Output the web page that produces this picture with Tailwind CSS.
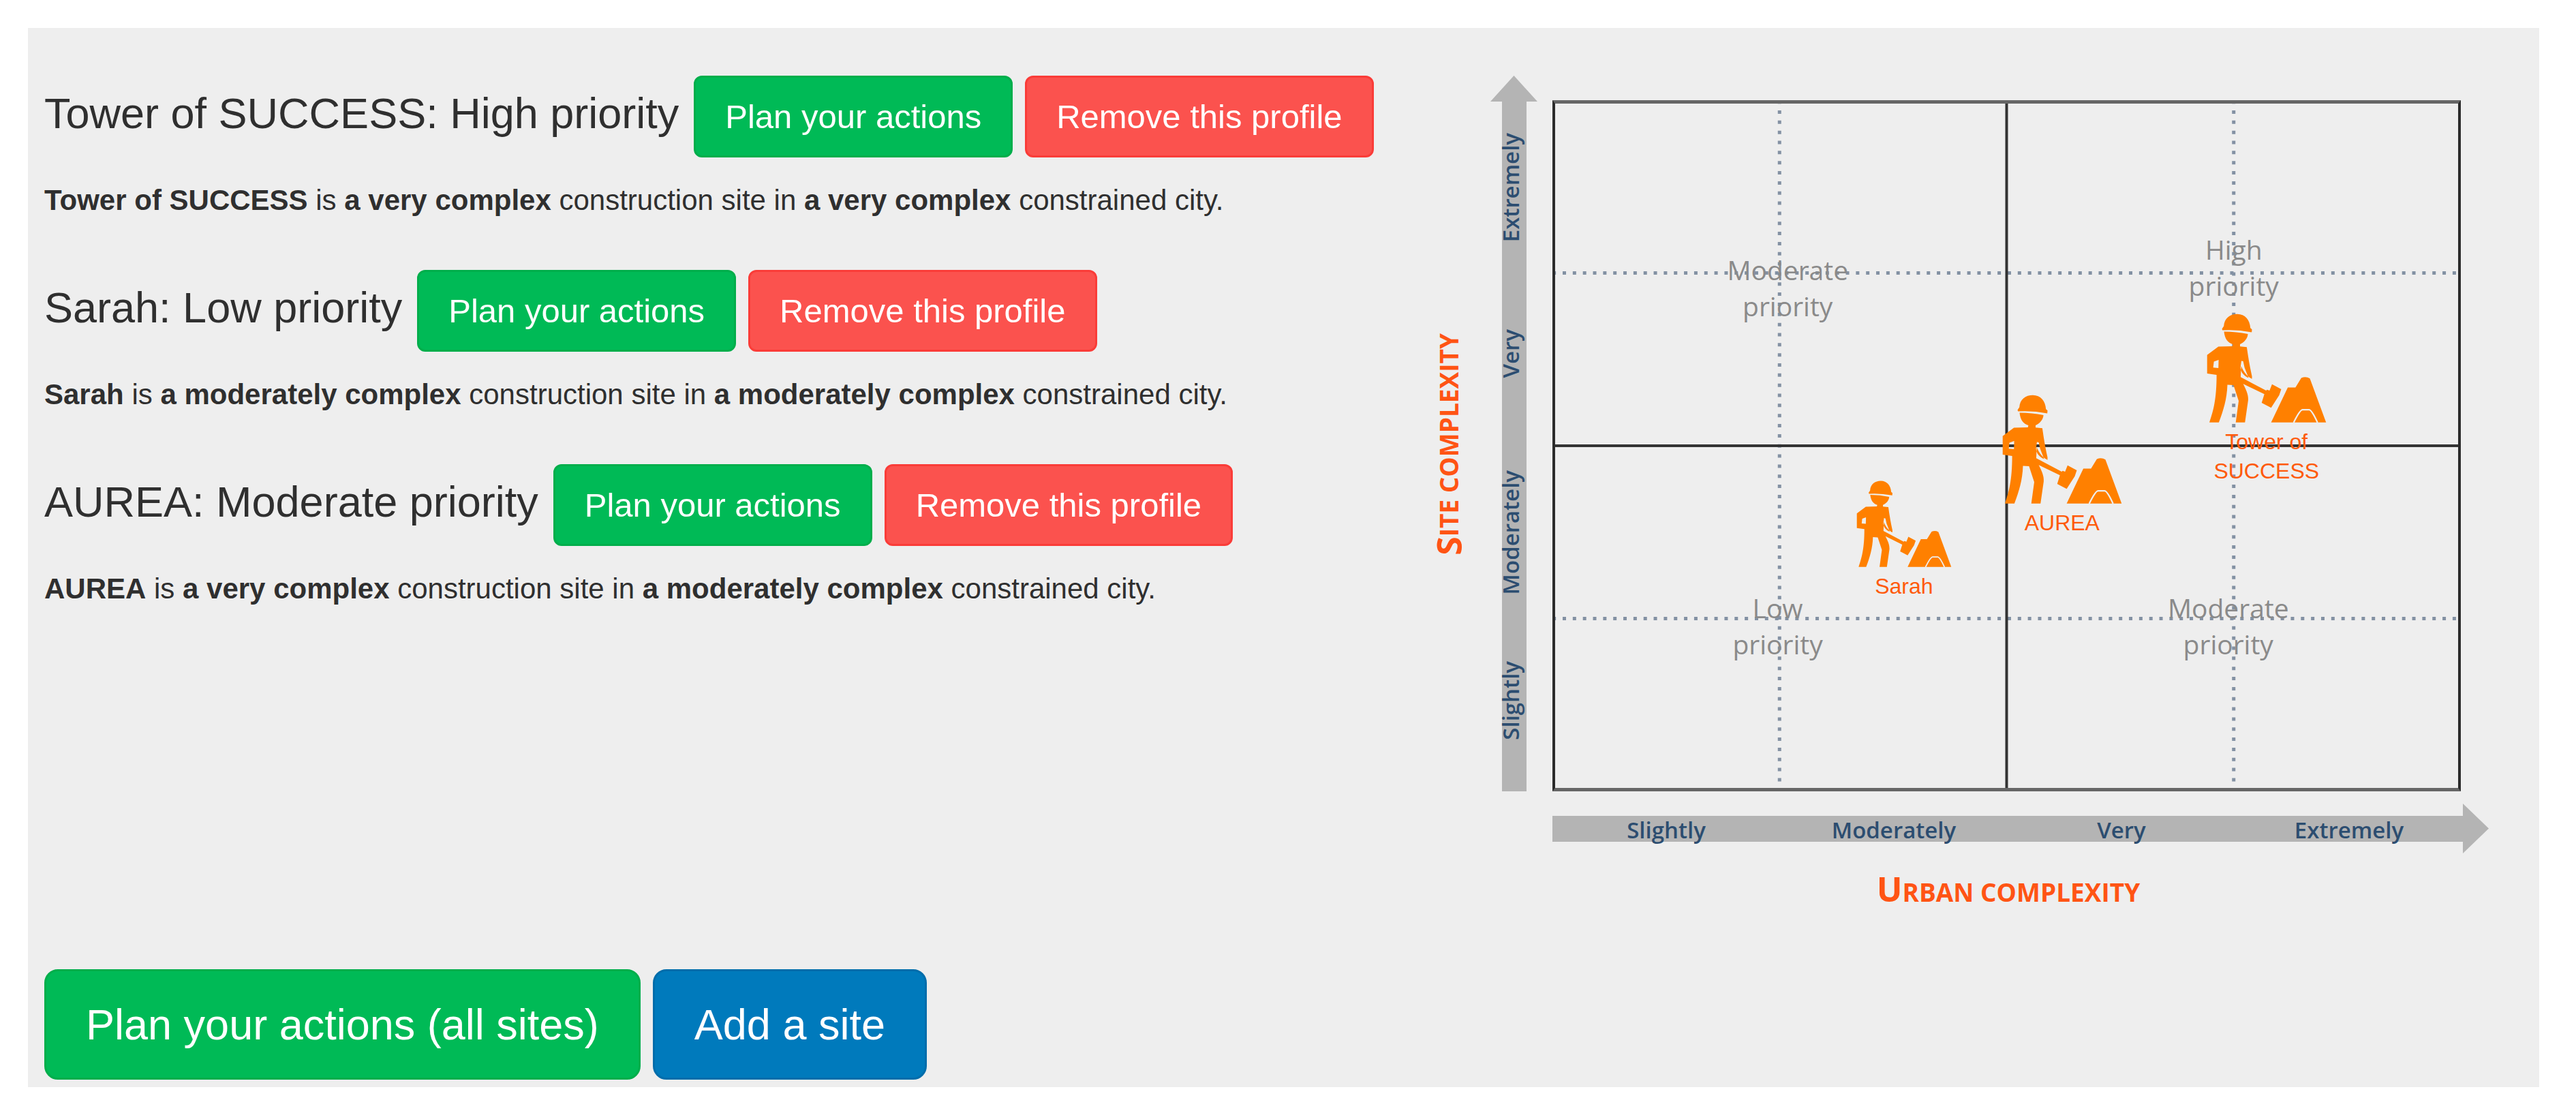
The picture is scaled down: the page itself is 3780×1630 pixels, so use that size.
<!DOCTYPE html>
<html lang="en">
<head>
<meta charset="utf-8">
<title>Site priorities</title>
<script src="https://cdn.jsdelivr.net/npm/@tailwindcss/browser@4"></script>
</head>
<body class="bg-white font-['Liberation_Sans',Arial,sans-serif] text-[#2f2f2f]">
<svg class="hidden" aria-hidden="true">
  <symbol id="worker" viewBox="0 0 528 484">
    <g fill="#ff8000">
      <path d="M66 68 L74 56 C76 20 102 2 134 2 C168 2 190 28 192 64 L199 70 L198 83 Q132 70 68 74 Z"/>
      <path d="M75 80 Q130 80 181 91 C180 112 162 130 146 136 L146 146 L176 149 C182 190 188 230 199 278 L199 290 C180 280 162 262 151 232 L149 282 L262 342 L266 338 L277 342 L288 314 L329 336 L320 362 L284 418 L242 396 L254 358 L160 312 C174 340 184 360 182 386 L168 483 L127 483 L140 388 L117 318 L90 316 C88 380 72 430 52 483 L10 483 C28 430 42 380 42 272 L0 266 L0 184 L50 147 L112 145 L114 136 C92 130 78 112 75 80 Z M30 213 L27 240 L50 242 L51 206 Z M152 210 L148 240 C150 262 162 276 184 286 L166 240 L160 212 Z" fill-rule="evenodd"/>
      <path d="M284 483 L358 328 L392 328 L418 286 Q438 278 456 288 L528 483 Z"/>
    </g>
    <path d="M384 484 Q412 427 424 427 L452 427 Q464 427 490 484" fill="none" stroke="#eee" stroke-width="7"/>
  </symbol>
</svg>

<main class="mt-[41px] mr-[54px] mb-[35px] ml-[41px] bg-[#eee] pt-[70px] pr-[74px] pb-[11px] pl-6">
  <div class="grid grid-cols-[2033fr_1554fr]">
    <section>
      <article class="mb-[72px]">
        <div class="flex items-baseline gap-[18px]">
          <h2 class="mr-1 text-[63px] leading-[72px] whitespace-nowrap">Tower of SUCCESS: High priority</h2>
          <button class="rounded-[12px] border-3 border-[#00ae4b] bg-[#00ba56] px-[43px] py-[29px] text-[49px] leading-[56px] whitespace-nowrap text-white">Plan your actions</button>
          <button class="rounded-[12px] border-3 border-[#fa3c38] bg-[#fb524e] px-[43px] py-[29px] text-[49px] leading-[56px] whitespace-nowrap text-white">Remove this profile</button>
        </div>
        <p class="mt-[33px] text-[42px] leading-[60px] whitespace-nowrap"><b>Tower of SUCCESS</b> is <b>a very complex</b> construction site in <b>a very complex</b> constrained city.</p>
      </article>
      <article class="mb-[72px]">
        <div class="flex items-baseline gap-[18px]">
          <h2 class="mr-1 text-[63px] leading-[72px] whitespace-nowrap">Sarah: Low priority</h2>
          <button class="rounded-[12px] border-3 border-[#00ae4b] bg-[#00ba56] px-[43px] py-[29px] text-[49px] leading-[56px] whitespace-nowrap text-white">Plan your actions</button>
          <button class="rounded-[12px] border-3 border-[#fa3c38] bg-[#fb524e] px-[43px] py-[29px] text-[49px] leading-[56px] whitespace-nowrap text-white">Remove this profile</button>
        </div>
        <p class="mt-[33px] text-[42px] leading-[60px] whitespace-nowrap"><b>Sarah</b> is <b>a moderately complex</b> construction site in <b>a moderately complex</b> constrained city.</p>
      </article>
      <article>
        <div class="flex items-baseline gap-[18px]">
          <h2 class="mr-1 text-[63px] leading-[72px] whitespace-nowrap">AUREA: Moderate priority</h2>
          <button class="rounded-[12px] border-3 border-[#00ae4b] bg-[#00ba56] px-[43px] py-[29px] text-[49px] leading-[56px] whitespace-nowrap text-white">Plan your actions</button>
          <button class="rounded-[12px] border-3 border-[#fa3c38] bg-[#fb524e] px-[43px] py-[29px] text-[49px] leading-[56px] whitespace-nowrap text-white">Remove this profile</button>
        </div>
        <p class="mt-[33px] text-[42px] leading-[60px] whitespace-nowrap"><b>AUREA</b> is <b>a very complex</b> construction site in <b>a moderately complex</b> constrained city.</p>
      </article>
    </section>

    <!-- Priority matrix: y axis title, y axis arrow, plot; x axis below -->
    <section class="grid grid-cols-[89px_91px_1fr] font-['Open_Sans',sans-serif]" aria-label="Priority matrix">
      <div class="flex items-center pt-8">
        <h3 class="rotate-180 text-[37px] leading-[56px] font-bold whitespace-nowrap text-[#ff5414] uppercase [writing-mode:vertical-rl] first-letter:text-[50px]">Site complexity</h3>
      </div>
      <div class="flex w-[69px] flex-col items-center">
        <svg class="h-[38px] w-full" viewBox="0 0 69 38" preserveAspectRatio="none"><path d="M34.500 0 L69 38 H0 Z" fill="#b4b4b4"/></svg>
        <div class="grid w-9 flex-1 grid-cols-[100%] grid-rows-[252fr_234fr_288fr_204fr] items-center justify-items-end bg-[#b4b4b4] pr-0.5 pb-[31px] text-[33px] leading-[42px] font-semibold text-[#2c4d70]">
          <span class="rotate-180 [writing-mode:vertical-rl]">Extremely</span>
          <span class="rotate-180 [writing-mode:vertical-rl]">Very</span>
          <span class="rotate-180 [writing-mode:vertical-rl]">Moderately</span>
          <span class="rotate-180 [writing-mode:vertical-rl]">Slightly</span>
        </div>
      </div>
      <div class="pt-9 pr-[41px]">
        <div class="relative aspect-[1333/1014] w-full">
          <svg class="absolute inset-0 size-full" aria-hidden="true">
            <g stroke="#8391a3" stroke-width="5" stroke-dasharray="5 9.840" stroke-dashoffset="-15">
              <line x1="25%" y1="0" x2="25%" y2="100%"/>
              <line x1="75%" y1="0" x2="75%" y2="100%"/>
              <line x1="0" y1="25%" x2="100%" y2="25%"/>
              <line x1="0" y1="75%" x2="100%" y2="75%"/>
            </g>
            <g stroke="#333" stroke-width="4">
              <line x1="50%" y1="0" x2="50%" y2="100%"/>
              <line x1="0" y1="50%" x2="100%" y2="50%"/>
            </g>
          </svg>
          <div class="absolute inset-0 border-x-4 border-y-5 border-x-[#2b2b2b] border-y-[#666]"></div>
          <div class="absolute -translate-x-1/2 text-center text-[39px] leading-[53px] font-medium text-[#8a8a8a]" style="left:25.900%;top:21.900%">Moderate<br>priority</div>
          <div class="absolute -translate-x-1/2 text-center text-[39px] leading-[53px] font-medium text-[#8a8a8a]" style="left:75%;top:18.900%">High<br>priority</div>
          <div class="absolute -translate-x-1/2 text-center text-[39px] leading-[53px] font-medium text-[#8a8a8a]" style="left:24.800%;top:70.800%">Low<br>priority</div>
          <div class="absolute -translate-x-1/2 text-center text-[39px] leading-[53px] font-medium text-[#8a8a8a]" style="left:74.400%;top:70.800%">Moderate<br>priority</div>

          <div class="absolute flex w-[177px] -translate-x-1/2 flex-col items-center font-['Liberation_Sans',Arial,sans-serif] text-[#ff5a0a]" style="left:78.600%;top:30.900%">
            <svg class="h-[160px] w-[177px]"><use href="#worker"/></svg>
            <span class="mt-[7px] text-center text-[32px] leading-[43px]">Tower of SUCCESS</span>
          </div>
          <div class="absolute flex w-[177px] -translate-x-1/2 flex-col items-center font-['Liberation_Sans',Arial,sans-serif] text-[#ff5a0a]" style="left:56.100%;top:42.600%">
            <svg class="h-[160px] w-[177px]"><use href="#worker"/></svg>
            <span class="mt-[7px] text-center text-[32px] leading-[43px]">AUREA</span>
          </div>
          <div class="absolute flex w-[141px] -translate-x-1/2 flex-col items-center font-['Liberation_Sans',Arial,sans-serif] text-[#ff5a0a]" style="left:38.700%;top:55%">
            <svg class="h-[127px] w-[141px]"><use href="#worker"/></svg>
            <span class="mt-[7px] text-center text-[32px] leading-[43px]">Sarah</span>
          </div>
        </div>
      </div>

      <div class="col-start-3 mt-[18px] flex h-[73px] items-center">
        <div class="grid h-[38px] flex-1 grid-cols-4 place-items-center bg-[#b4b4b4] text-[33px] leading-[42px] font-semibold text-[#2c4d70]">
          <span>Slightly</span><span>Moderately</span><span>Very</span><span>Extremely</span>
        </div>
        <svg class="h-full w-[38px]" viewBox="0 0 38 73" preserveAspectRatio="none"><path d="M0 0 L38 36.500 L0 73 Z" fill="#b4b4b4"/></svg>
      </div>
      <h3 class="col-start-3 mt-[22px] pr-[36px] text-center text-[37px] leading-[60px] font-bold text-[#ff5414] uppercase first-letter:text-[50px]">Urban complexity</h3>
    </section>
  </div>

  <div class="mt-[83px] flex gap-[18px]">
    <button class="rounded-[20px] border-3 border-[#00ae4b] bg-[#00ba56] px-[58px] py-[42px] text-[63px] leading-[72px] whitespace-nowrap text-white">Plan your actions (all sites)</button>
    <button class="rounded-[20px] border-3 border-[#006dab] bg-[#007abc] px-[58px] py-[42px] text-[63px] leading-[72px] whitespace-nowrap text-white">Add a site</button>
  </div>
</main>
</body>
</html>
